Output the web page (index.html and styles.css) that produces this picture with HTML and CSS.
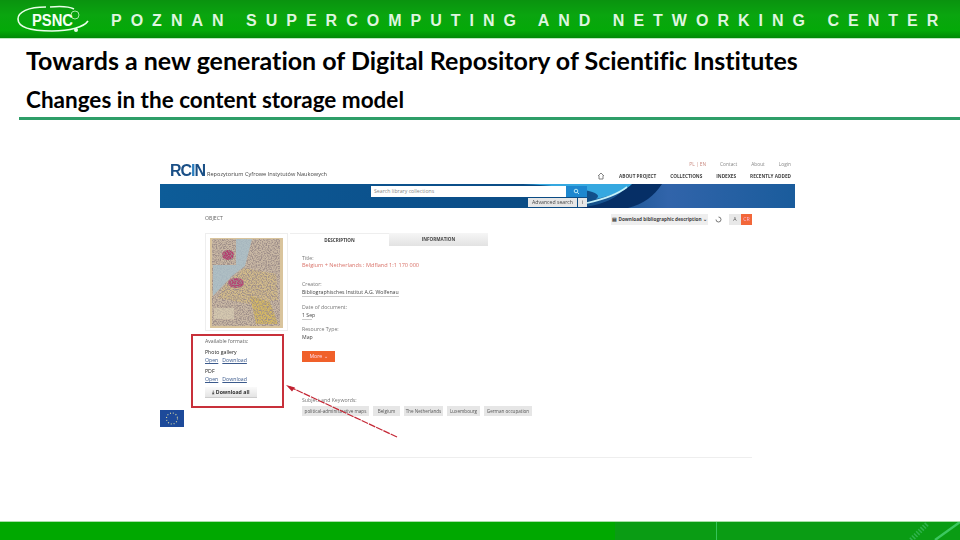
FILE: index.html
```html
<!DOCTYPE html>
<html lang="en">
<head>
    <meta charset="UTF-8">
    <title>Changes in the content storage model</title>
    <link rel="stylesheet" href="styles.css">
</head>
<body>
    <div class="slide">
        <div class="banner">
            <svg class="psnc-logo" width="76" height="32" viewBox="0 0 76 32">
                <path d="M30 4 C12 4 2 9 2 16 C2 24 14 28 36 28 C54 28 68 24 72 18" fill="none" stroke="#e8ffe8" stroke-width="1.6"/>
                <path d="M34 4 C44 3 54 4 58 6" fill="none" stroke="#e8ffe8" stroke-width="1.6"/>
                <circle cx="59" cy="12" r="4" fill="none" stroke="#a8e8a8" stroke-width="1"/>
                <circle cx="60" cy="27" r="2" fill="#e8ffe8"/>
                <text x="16" y="23" class="psnc-text" textLength="41" lengthAdjust="spacingAndGlyphs">PSNC</text>
            </svg>
            <div class="banner-name">POZNAN SUPERCOMPUTING AND NETWORKING CENTER</div>
        </div>

        <div class="heading">
            <h1>Towards a new generation of Digital Repository of Scientific Institutes</h1>
            <h2>Changes in the content storage model</h2>
        </div>

        <div class="shot">
            <div class="shot-top">
                <div class="rcin-logo">RC<span class="rcin-i">I</span>N</div>
                <div class="rcin-tag">Repozytorium Cyfrowe Instytutów Naukowych</div>
                <div class="shot-nav">
                    <div class="nav-small">
                        <span class="lang">PL | EN</span><span>Contact</span><span>About</span><span>Login</span>
                    </div>
                    <div class="nav-main">
                        <svg width="8" height="8" viewBox="0 0 8 8"><path d="M1 4 L4 1 L7 4 M2 3.5 V7 H6 V3.5" fill="none" stroke="#666" stroke-width=".8"/></svg>
                        <span>ABOUT PROJECT</span><span>COLLECTIONS</span><span>INDEXES</span><span>RECENTLY ADDED</span>
                    </div>
                </div>
            </div>

            <div class="band">
                <svg class="swirl" width="635" height="24" viewBox="0 0 635 24">
                    <path d="M420 24 C448 20 460 12 468 0 H502 C494 12 484 20 468 24 Z" fill="#062f66"/>
                    <path d="M363 0 H472 C466 6 454 11 436 15 C446 8 420 3 363 0 Z" fill="#35a8e0"/>
                    <path d="M427 19 C445 15 458 10 467 3" fill="none" stroke="#c4f2fa" stroke-width="1.6"/>
                </svg>
                <div class="search">
                    <div class="search-row">
                        <div class="search-input">Search library collections</div>
                        <div class="search-btn">
                            <svg width="7" height="7" viewBox="0 0 7 7"><circle cx="3" cy="3" r="1.8" fill="none" stroke="#dff" stroke-width=".8"/><path d="M4.3 4.3 L6 6" stroke="#dff" stroke-width=".8"/></svg>
                        </div>
                    </div>
                    <div class="search-more">
                        <div class="adv-btn">Advanced search</div>
                        <div class="adv-info">i</div>
                    </div>
                </div>
            </div>

            <div class="object">
                <div class="side">
                    <div class="object-label">OBJECT</div>
                    <div class="thumb">
                        <svg width="73" height="90" viewBox="0 0 73 90">
                            <defs>
                                <filter id="speckle" x="0" y="0" width="100%" height="100%">
                                    <feTurbulence type="fractalNoise" baseFrequency="0.8" numOctaves="2" seed="7"/>
                                    <feColorMatrix values="0 0 0 0 .34  0 0 0 0 .27  0 0 0 0 .25  3.4 0 0 0 -1.35"/>
                                </filter>
                            </defs>
                            <rect width="73" height="90" fill="#d9c49c"/>
                            <rect x="2" y="1" width="68" height="87" fill="#c9b8a4"/>
                            <path d="M34 30 L66 36 L68 62 L40 66 L8 60 L14 48 Z" fill="#d2bb8a"/>
                            <path d="M40 58 L60 64 L68 86 L46 86 Z" fill="#d4b864"/>
                            <ellipse cx="18" cy="17" rx="6" ry="5" fill="#b83a6e"/>
                            <ellipse cx="26" cy="45" rx="8" ry="5" fill="#b83f72"/>
                            <rect x="2" y="1" width="68" height="87" filter="url(#speckle)"/>
                            <path d="M26 1 H42 L35 28 L22 38 L3 58 V27 L26 27 Z" fill="#a9c0cc" opacity=".8"/>
                            <rect x="4" y="70" width="20" height="11" fill="#dcd2b8" opacity=".6"/>
                        </svg>
                    </div>
                    <div class="formats">
                        <div class="fmt-title">Available formats:</div>
                        <div class="fmt-name">Photo gallery</div>
                        <div class="fmt-links"><a>Open</a><a>Download</a></div>
                        <div class="fmt-name">PDF</div>
                        <div class="fmt-links"><a>Open</a><a>Download</a></div>
                        <div class="fmt-all">⤓ Download all</div>
                    </div>
                    <svg class="eu-flag" width="24" height="17" viewBox="0 0 24 17">
                        <rect width="24" height="17" fill="#1d4a9a"/>
                        <circle cx="12" cy="8.5" r="5.5" fill="none" stroke="#d8d8a0" stroke-width="1.1" stroke-dasharray="1 1.9"/>
                    </svg>
                </div>

                <div class="main">
                    <div class="tools">
                        <div class="tool-dl">▤ Download bibliographic description ⌄</div>
                        <div class="tool-ico">
                            <svg width="7" height="7" viewBox="0 0 7 7"><path d="M1 3.5 A2.5 2.5 0 1 0 3.5 1" fill="none" stroke="#555" stroke-width=".8"/></svg>
                        </div>
                        <div class="tool-pair"><span class="tool-a">A</span><span class="tool-b">CR</span></div>
                    </div>
                    <div class="tabs">
                        <div class="tab tab-on">DESCRIPTION</div>
                        <div class="tab">INFORMATION</div>
                    </div>
                    <div class="fields">
                        <div class="lbl">Title:</div>
                        <div class="val val-title">Belgium + Netherlands : Mdfland 1:1 170 000</div>
                        <div class="lbl gap-a">Creator:</div>
                        <div class="val val-line">Bibliographisches Institut A.G. Wolfenau</div>
                        <div class="lbl gap-b">Date of document:</div>
                        <div class="val val-line val-short">1 Sep</div>
                        <div class="lbl gap-d">Resource Type:</div>
                        <div class="val">Map</div>
                        <div class="more-btn">More ⌄</div>
                        <div class="lbl gap-c">Subject and Keywords:</div>
                        <div class="chips">
                            <span>political-administrative maps</span><span>Belgium</span><span>The Netherlands</span><span>Luxembourg</span><span>German occupation</span>
                        </div>
                    </div>
                </div>
            </div>
            <div class="end-rule"></div>

            <div class="mark-box"></div>
            <svg class="mark-arrow" width="120" height="60" viewBox="0 0 120 60">
                <path d="M113 56 L6 6" fill="none" stroke="#c42634" stroke-width="1.2" stroke-dasharray="7 1"/>
                <path d="M2 4 L11 6.5 L8 10.5 Z" fill="#c02030"/>
            </svg>
        </div>

        <div class="foot">
            <svg class="foot-art" width="345" height="18" viewBox="0 0 345 18">
                <rect width="345" height="18" fill="#0a9c14"/>
                <path d="M101.5 0 V18" stroke="#35c45a" stroke-width="1"/>
                <path d="M320 18 L345 0" stroke="#3cc860" stroke-width="2.4"/>
                <path d="M296 18 L312 2" stroke="#2fb34c" stroke-width="5" stroke-dasharray="1.5 1.5"/>
            </svg>
        </div>
    </div>
</body>
</html>
```

FILE: styles.css
```css
body {
    margin: 0;
    background-color: #fff;
    font-family: "Open Sans", sans-serif;
}

.slide {
    width: 960px;
    height: 540px;
    display: flex;
    flex-direction: column;
    overflow: hidden;
}

.banner {
    height: 38px;
    flex: none;
    display: flex;
    align-items: center;
    padding-left: 16px;
    background: linear-gradient(#0a930f 0, #0aa50f 40%, #04a908 80%, #018a06 100%);
    border-bottom: 1px solid #bfe8bf;
}

.psnc-logo {
    flex: none;
}

.psnc-text {
    font-family: "Liberation Sans", sans-serif;
    font-weight: 700;
    font-size: 16px;
    fill: #f4fff4;
}

.banner-name {
    margin-left: 19px;
    padding-top: 3px;
    font-family: "Liberation Sans", sans-serif;
    font-weight: 700;
    font-size: 16px;
    letter-spacing: 9px;
    color: #dff5df;
    white-space: nowrap;
}

.heading {
    height: 81px;
    flex: none;
    box-sizing: border-box;
    margin-left: 19px;
    padding: 7px 0 0 7px;
    border-bottom: 3px solid #2e9e68;
    color: #000;
    font-family: Lato, sans-serif;
    font-weight: 700;
    font-variant-ligatures: none;
}

.heading h1 {
    margin: 0;
    font-size: 25px;
    line-height: 28px;
    white-space: nowrap;
}

.heading h2 {
    margin: 13px 0 0;
    font-size: 22.5px;
    line-height: 26px;
    font-weight: 700;
    white-space: nowrap;
}

/* embedded screenshot of the repository page */
.shot {
    position: relative;
    width: 635px;
    height: 322px;
    margin: 35px 0 0 160px;
    flex: none;
    filter: blur(0.6px);
    font-size: 5.2px;
    color: #555;
}

.shot-top {
    height: 29px;
    display: flex;
    align-items: flex-start;
}

.rcin-logo {
    margin: 6px 0 0 10px;
    width: 37px;
    font-family: "Liberation Sans", sans-serif;
    font-size: 16px;
    line-height: 19px;
    font-weight: 700;
    letter-spacing: -1px;
    color: #1a4f86;
}

.rcin-i {
    color: #2b7fc0;
}

.rcin-tag {
    margin-top: 15px;
    font-size: 5.6px;
    line-height: 9px;
    color: #444;
    white-space: nowrap;
}

.shot-nav {
    margin-left: auto;
    padding-right: 4px;
    text-align: right;
}

.nav-small {
    display: flex;
    justify-content: flex-end;
    gap: 14px;
    margin-top: 5px;
    height: 8px;
    font-size: 4.8px;
    line-height: 8px;
    color: #888;
}

.lang {
    color: #c98a80;
}

.nav-main {
    display: flex;
    justify-content: flex-end;
    align-items: center;
    gap: 14px;
    margin-top: 3px;
    height: 10px;
    font-size: 4.7px;
    font-weight: 700;
    color: #444;
    white-space: nowrap;
}

.band {
    position: relative;
    height: 24px;
    background: linear-gradient(90deg, #0d5c98 0, #0b4f8a 45%, #0a4a82 65%, #3164aa 80%, #1a5c9c 100%);
}

.swirl {
    position: absolute;
    left: 0;
    top: 0;
}

.search {
    position: absolute;
    left: 211px;
    top: 1.5px;
    width: 216px;
}

.search-row {
    display: flex;
    height: 11px;
}

.search-input {
    flex: 1;
    padding-left: 3px;
    line-height: 11px;
    background-color: #fff;
    color: #888;
}

.search-btn {
    width: 21px;
    display: flex;
    align-items: center;
    justify-content: center;
    background-color: #1d87cf;
}

.search-more {
    display: flex;
    justify-content: flex-end;
    gap: 1px;
    margin-top: 1px;
}

.adv-btn,
.adv-info {
    height: 9px;
    line-height: 9px;
    text-align: center;
    background-color: #e6e6e6;
    color: #444;
}

.adv-btn {
    width: 49px;
}

.adv-info {
    width: 9px;
}

.object {
    display: flex;
}

.side {
    width: 130px;
    flex: none;
}

.object-label {
    height: 25px;
    padding: 6px 0 0 45px;
    box-sizing: border-box;
    line-height: 8px;
    color: #666;
}

.thumb {
    width: 73px;
    height: 90px;
    margin-left: 45px;
    padding: 4px 4px 2px;
    border: 1px solid #eee;
}

.thumb svg {
    display: block;
}

.formats {
    height: 73px;
    padding: 6px 0 0 45px;
}

.fmt-title {
    height: 11px;
    line-height: 8px;
    color: #666;
}

.fmt-name {
    height: 8px;
    line-height: 8px;
    color: #222;
}

.fmt-links {
    height: 11px;
    line-height: 8px;
    display: flex;
    gap: 4px;
}

.fmt-links a {
    color: #3b5a8c;
    text-decoration: underline;
}

.fmt-all {
    width: 52px;
    height: 10px;
    margin-top: 1px;
    line-height: 10px;
    text-align: center;
    font-weight: 700;
    color: #333;
    background: linear-gradient(#fafafa, #e4e4e4);
    border-bottom: 1px solid #ccc;
}

.eu-flag {
    display: block;
}

.main {
    width: 462px;
    flex: none;
}

.tools {
    height: 25px;
    display: flex;
    align-items: flex-start;
    justify-content: flex-end;
    padding-top: 6px;
    box-sizing: border-box;
}

.tool-dl {
    width: 97px;
    height: 11px;
    line-height: 11px;
    text-align: center;
    font-size: 4.7px;
    font-weight: 700;
    color: #444;
    background-color: #eee;
    white-space: nowrap;
}

.tool-ico {
    width: 9px;
    height: 11px;
    margin-left: 6px;
    display: flex;
    align-items: center;
    justify-content: center;
}

.tool-pair {
    display: flex;
    margin-left: 6px;
    text-align: center;
    line-height: 11px;
    height: 11px;
}

.tool-a {
    width: 12px;
    background-color: #e8e8e8;
}

.tool-b {
    width: 11px;
    background-color: #f2673a;
    color: #fbd;
}

.tabs {
    display: flex;
    width: 198px;
}

.tab {
    flex: 1;
    height: 13px;
    line-height: 13px;
    text-align: center;
    font-size: 4.6px;
    font-weight: 700;
    color: #444;
    background: linear-gradient(#f6f6f6, #e2e2e2);
}

.tab-on {
    background: #fff;
    border-top: 1px solid #eee;
    height: 12px;
}

.fields {
    padding: 8px 0 0 12px;
    line-height: 8px;
}

.lbl {
    color: #777;
}

.val {
    color: #444;
}

.val-title {
    line-height: 7px;
    color: #d9736a;
    font-size: 5.6px;
    white-space: nowrap;
}

.val-line {
    display: inline-block;
    border-bottom: 1px solid #ccc;
    line-height: 7px;
    white-space: nowrap;
}

.val-short {
    width: 10px;
}

.gap-a {
    margin-top: 11px;
}

.gap-b {
    margin-top: 6px;
}

.gap-d {
    margin-top: 5px;
}

.gap-c {
    margin-top: 34px;
}

.more-btn {
    width: 33px;
    height: 11px;
    margin-top: 10px;
    line-height: 11px;
    text-align: center;
    color: #fde;
    background-color: #f0602a;
}

.chips {
    display: grid;
    grid-template-columns: 67px 27px 39px 33px 48px;
    gap: 4px;
    margin-top: 2px;
}

.chips span {
    height: 10px;
    font-size: 4.6px;
    line-height: 10px;
    text-align: center;
    color: #555;
    background-color: #e6e6e6;
    white-space: nowrap;
}

.end-rule {
    width: 462px;
    margin: 30px 0 0 130px;
    border-top: 1px solid #eee;
}

.mark-box {
    position: absolute;
    left: 31px;
    top: 179px;
    width: 89px;
    height: 70px;
    border: 2px solid #c8303a;
}

.mark-arrow {
    position: absolute;
    left: 124px;
    top: 226px;
}

.foot {
    margin-top: auto;
    height: 18px;
    flex: none;
    display: flex;
    justify-content: flex-end;
    background-color: #00a800;
    box-shadow: 0 -1px 0 #a8e0a8;
}
```
